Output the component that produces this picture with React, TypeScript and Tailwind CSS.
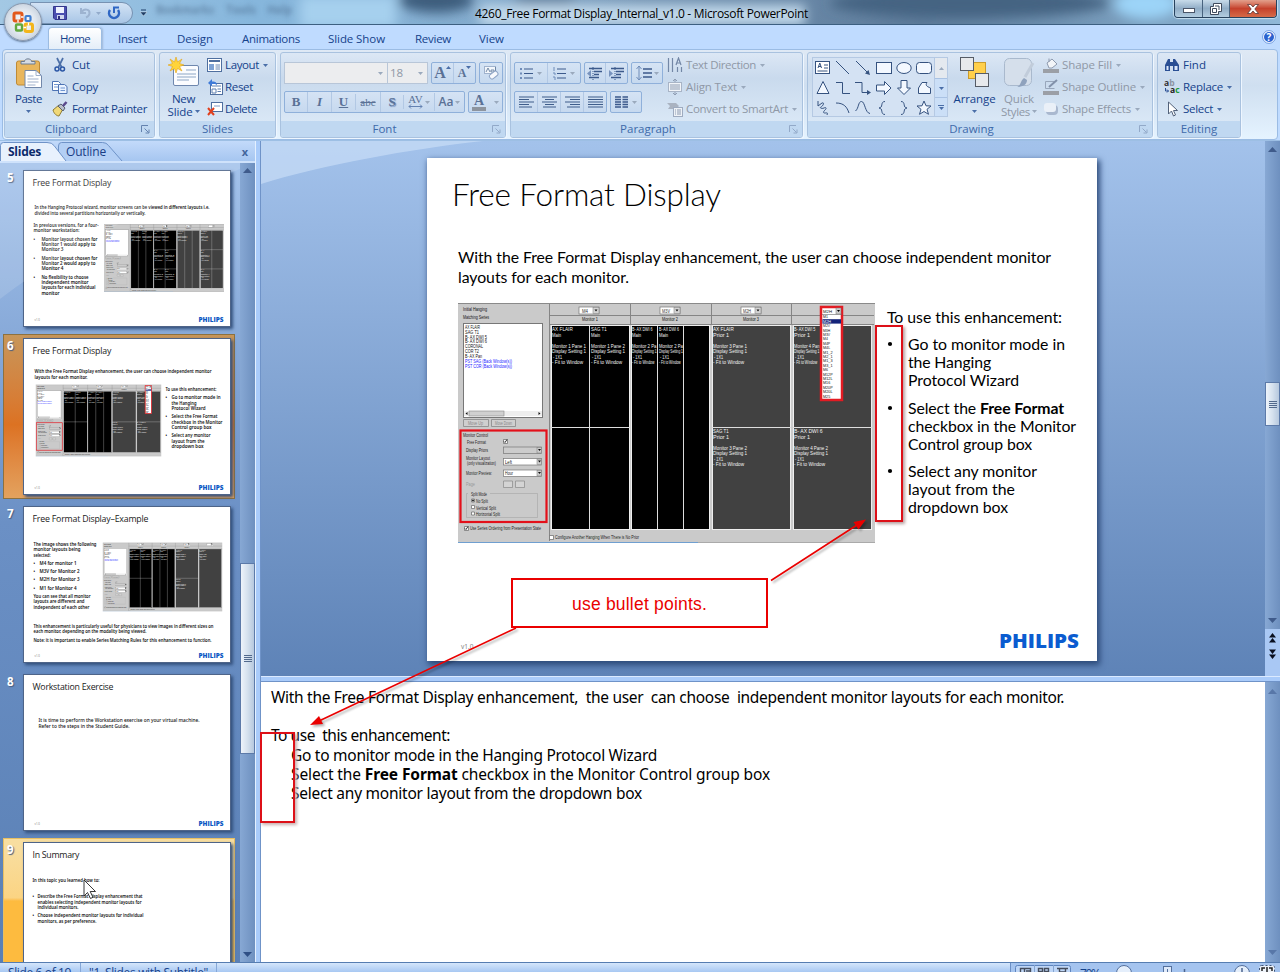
import { useLayoutEffect, useRef, useState, type ReactNode } from "react";

/* Text that spreads its letters to a given width. */
function Fit({ w, className = "", children }: { w: number; className?: string; children: ReactNode }) {
  const ref = useRef<HTMLSpanElement>(null);
  const [gap, setGap] = useState(0);
  useLayoutEffect(() => {
    const el = ref.current;
    if (!el) return;
    el.style.letterSpacing = "0px";
    const natural = el.getBoundingClientRect().width;
    const next = (w - natural) / Math.max(1, (el.textContent || "").length);
    el.style.letterSpacing = `${next}px`;
    setGap(next);
  }, [w]);
  return (
    <span ref={ref} className={`inline-block whitespace-pre ${className}`} style={{ letterSpacing: gap }}>
      {children}
    </span>
  );
}

function Caret({ dim = false, className = "" }: { dim?: boolean; className?: string }) {
  return (
    <svg width="5" height="3" viewBox="0 0 5 3" className={`shrink-0 ${className}`}>
      <path d="M0 0h5L2.5 3z" fill={dim ? "#9aa9bd" : "#4a6ea8"} />
    </svg>
  );
}

/* ---------- ribbon building blocks ---------- */

function Group({ label, width, launcher, dimLauncher, children }: { label: string; width: string; launcher?: boolean; dimLauncher?: boolean; children: ReactNode }) {
  return (
    <section className={`${width} flex h-[86px] shrink-0 flex-col overflow-hidden rounded-[3px] border border-[#a9c2df] bg-linear-to-b from-[#dce7f5] via-[#c9daed] via-30% to-[#dfecf9] shadow-[1px_1px_0_#eef6ff]`}>
      <div className="flex h-[68px] pt-px">{children}</div>
      <div className="flex h-4 items-center bg-[#c0d8f1]">
        <span className="flex-1 text-center text-[11.5px] leading-4 text-[#3e6aaa]">{label}</span>
        {launcher && (
          <svg width="9" height="9" viewBox="0 0 9 9" className="mr-1 ml-1" fill="none" stroke={dimLauncher ? "#92a9c8" : "#6482ae"}>
            <path d="M.5 7V.5H7M3.5 3.5l4 4M8 4.5V8H4.5" />
          </svg>
        )}
      </div>
    </section>
  );
}

function Row({ icon, label, w, caret, dim, iconW = "w-[18px]" }: { icon: ReactNode; label: string; w: number; caret?: boolean; dim?: boolean; iconW?: string }) {
  return (
    <div className={`flex h-[22px] items-center ${dim ? "text-[#8f98a6]" : "text-[#15428b]"}`}>
      <span className={`${iconW} flex shrink-0`}>{icon}</span>
      <Fit w={w} className="leading-[22px]">{label}</Fit>
      {caret && <Caret dim={dim} className="ml-1" />}
    </div>
  );
}

function Strip({ width, cells }: { width: string; cells: ReactNode[] }) {
  return (
    <div className={`${width} flex h-[22px] items-stretch rounded-[2px] border border-[#8fb0da] bg-linear-to-b from-[#d5e3f4] to-[#c6d9ef]`}>
      {cells.map((c, i) => (
        <div key={i} className={`flex flex-1 items-center justify-center ${i ? "border-l border-[#b2c8e4]" : ""}`}>{c}</div>
      ))}
    </div>
  );
}

function Ico({ children, w = 16, h = 16, className = "" }: { children: ReactNode; w?: number; h?: number; className?: string }) {
  return (
    <svg width={w} height={h} viewBox={`0 0 ${w} ${h}`} className={`shrink-0 ${className}`} fill="none">
      {children}
    </svg>
  );
}

const Lines = ({ d }: { d: string }) => (
  <Ico w={15} h={12}><path d={d} stroke="#3f5d8a" strokeWidth="1.2" /></Ico>
);

/* ---------- title bar ---------- */

function TitleBar() {
  return (
    <header className="relative flex h-[25px] shrink-0 items-start overflow-hidden border-b border-[#3c5f80] bg-linear-to-r from-[#a8cdec] via-[#5e7c9b] via-72% to-[#8fb8d8]">
      <div className="absolute inset-0 bg-linear-to-r from-[#a3c8e4] from-0% via-[#86b6dc] via-20% to-transparent to-50%" />
      <svg className="absolute inset-0" width="1280" height="25" viewBox="0 0 1280 25">
        <defs>
          <filter id="haze" x="-20%" y="-100%" width="140%" height="300%"><feGaussianBlur stdDeviation="6" /></filter>
          <filter id="soft" x="-20%" y="-100%" width="140%" height="300%"><feGaussianBlur stdDeviation="2.4" /></filter>
        </defs>
        <g filter="url(#haze)">
          <rect x="300" y="-4" width="96" height="32" fill="#a6d0ee" />
          <ellipse cx="436" cy="0" rx="38" ry="13" fill="#3d5d7d" />
          <ellipse cx="545" cy="-2" rx="32" ry="9" fill="#5d7f9f" />
          <rect x="480" y="5" width="325" height="20" fill="#c3daec" />
          <ellipse cx="970" cy="3" rx="140" ry="15" fill="#456482" />
          <ellipse cx="1146" cy="4" rx="32" ry="15" fill="#9cd4f8" />
        </g>
        <g filter="url(#soft)" fill="#48688a" opacity=".6" fontFamily="Open Sans, sans-serif" fontSize="12" fontWeight="700">
          <text x="156" y="14" textLength="58" lengthAdjust="spacingAndGlyphs">Bookmarks</text><text x="226" y="14" textLength="30" lengthAdjust="spacingAndGlyphs">Tools</text><text x="267" y="14" textLength="25" lengthAdjust="spacingAndGlyphs">Help</text>
        </g>
      </svg>
      <div className="relative ml-[30px] flex h-[22px] w-[103px] items-center gap-2 rounded-r-full border border-[#7792b2] bg-linear-to-b from-[#d3e3f5] to-[#a9c6e6] pl-[22px] mt-[2px]">
        <Ico w={14} h={14}>
          <path d="M.5.5h13v13H2L.5 12z" fill="#4a4fb0" stroke="#34368c" /><path d="M3 1h8v6H3z" fill="#eef2ff" /><path d="M4 9h7v4H4z" fill="#cfd6ee" /><path d="M5 10h2v3H5z" fill="#2d2f7e" />
        </Ico>
        <Ico w={22} h={14} className="ml-1">
          <path d="M2 2v5h5M2.500 6.500C5 2 11 3 10.500 7.500c-.2 2-1.500 3.200-3.500 4" stroke="#9db3d0" strokeWidth="2" /><path d="M17 6h5l-2.500 3z" fill="#93abcb" />
        </Ico>
        <Ico w={14} h={14} className="-ml-0.5">
          <path d="M3 4A5 5 0 1 0 11 4" stroke="#2f67c4" strokeWidth="2.500" /><path d="M6 1.500h6M7 1v6" stroke="#2f67c4" strokeWidth="2" />
        </Ico>
      </div>
      <Ico w={7} h={8} className="relative mt-[9px] ml-[7px]"><path d="M1 1h5" stroke="#1f3f68" /><path d="M0 3h7L3.500 7z" fill="#1f3f68" stroke="#fff" strokeWidth=".4" /></Ico>
      <div className="relative mt-[4px] ml-[328px] text-[12px] leading-5 text-black">
        <Fit w={333}>4260_Free Format Display_Internal_v1.0 - Microsoft PowerPoint</Fit>
      </div>
      <div className="relative ml-auto mr-[3px] flex h-[18px] w-[103px] overflow-hidden rounded-b-[4px] border border-t-0 border-[#28425d] shadow-[0_0_1px_1px_#c6dff0]">
        <div className="flex w-[28px] items-center justify-center border-r border-[#48637e] bg-linear-to-b from-[#c8dbea] via-[#91adc6] to-[#b3cde0]">
          <Ico w={12} h={5} className="mt-1"><rect x=".5" y=".5" width="11" height="4" fill="#fff" stroke="#4a5568" /></Ico>
        </div>
        <div className="flex w-[27px] items-center justify-center border-r border-[#48637e] bg-linear-to-b from-[#c8dbea] via-[#91adc6] to-[#b3cde0]">
          <Ico w={12} h={12}><path d="M3.500.5h8v8h-3v3h-8v-8h3z" fill="#fff" stroke="#3f4a5c" /><path d="M2.500 5.500h4v4h-4zM5 3h4v4" stroke="#3f4a5c" /></Ico>
        </div>
        <div className="flex flex-1 items-center justify-center bg-linear-to-b from-[#e2a08c] via-[#c5412c] via-50% to-[#d66a48]">
          <Ico w={12} h={10}><path d="M.5.500h3.300L6 3 8.200.5h3.300L7.800 5l3.700 4.500H8.200L6 7 3.800 9.500H.5L4.200 5z" fill="#fff" stroke="#5b3535" strokeWidth=".8" /></Ico>
        </div>
      </div>
    </header>
  );
}

function OfficeButton() {
  return (
    <div className="absolute top-[3px] left-[4px] z-20 flex size-[38px] items-center justify-center rounded-full border border-[#8b99ad] bg-radial from-white via-[#dfe6ee] to-[#b3c0d0] shadow-[0_1px_2px_#5c7390]">
      <svg width="24" height="24" viewBox="0 0 24 24" fill="none" strokeWidth="3">
        <rect x="3" y="3" width="8" height="8" rx="1.500" stroke="#e2591c" />
        <rect x="14.500" y="6" width="5" height="5" rx="1" stroke="#3f7ed0" strokeWidth="2.200" />
        <rect x="5" y="14.500" width="6" height="6" rx="1" stroke="#62a93e" strokeWidth="2.400" />
        <rect x="14" y="14" width="7.500" height="7.500" rx="1.500" stroke="#f3b51b" />
        <path d="M10 7h2.500M7 9.500v3M15 17.500h-2.500M17.500 15.500v-3" stroke="#fff" strokeWidth="1.300" />
      </svg>
    </div>
  );
}

function TabBar() {
  return (
    <nav className="flex h-[24px] shrink-0 items-start bg-[#bfdbff] pt-[2px] text-[11.5px] text-[#15428b]">
      <div className="ml-[48px] flex h-[23px] w-[54px] justify-center rounded-t-[4px] border border-b-0 border-[#9cbce2] bg-linear-to-b from-white to-[#e3edf8] shadow-[1px_0_2px_#9fb8d8]"><Fit w={30} className="leading-[22px]">Home</Fit></div>
      <Fit w={29} className="ml-[16px] leading-[24px]">Insert</Fit>
      <Fit w={36} className="ml-[30px] leading-[24px]">Design</Fit>
      <Fit w={58} className="ml-[29px] leading-[24px]">Animations</Fit>
      <Fit w={57} className="ml-[28px] leading-[24px]">Slide Show</Fit>
      <Fit w={36} className="ml-[30px] leading-[24px]">Review</Fit>
      <Fit w={25} className="ml-[28px] leading-[24px]">View</Fit>
      <svg className="mt-[3px] mr-[4px] ml-auto" width="14" height="14" viewBox="0 0 14 14">
        <circle cx="7" cy="7" r="6.400" fill="#fff" stroke="#6d9ae0" /><circle cx="7" cy="7" r="5" fill="#2a62cf" />
        <text x="7" y="10.500" textAnchor="middle" fontSize="10" fontWeight="700" fontFamily="Open Sans, sans-serif" fill="#fff">?</text>
      </svg>
    </nav>
  );
}

/* ---------- ribbon ---------- */

const glyph = "font-['Liberation_Serif',serif] font-bold text-[#5a7196]";

function ShapeGallery() {
  const s = "#35527f";
  const cells = [
    <g key="a"><rect x=".5" y="1.500" width="14" height="12" fill="#fff" stroke={s} /><path d="M9 5h4M9 8h4M2.500 11h10M3 8l1.800-5L6.500 8M3.500 6.500h2.500" stroke={s} /></g>,
    <path key="b" d="M1 1l13 13" stroke={s} />,
    <g key="c"><path d="M1 1l12 12" stroke={s} /><path d="M15 15l-5-1.500L13.500 10z" fill={s} /></g>,
    <rect key="d" x=".5" y="2.500" width="15" height="11" fill="#f3f8ff" stroke={s} />,
    <ellipse key="e" cx="8" cy="8" rx="7.200" ry="5.500" fill="#f3f8ff" stroke={s} />,
    <rect key="f" x=".5" y="2.500" width="15" height="11" rx="3" fill="#f3f8ff" stroke={s} />,
    <path key="g" d="M8 1.500l6 12H2z" fill="#f3f8ff" stroke={s} />,
    <path key="h" d="M1 2.500h6.500v11H15" stroke={s} />,
    <g key="i"><path d="M0 2.500h7v10h6" stroke={s} /><path d="M16 12.500L12 10v5z" fill={s} /></g>,
    <path key="j" d="M.5 5h8V1.500L15 8l-6.500 6.500V11h-8z" fill="#f3f8ff" stroke={s} />,
    <path key="k" d="M5 .5h6V8h3.500L8 14.500 1.500 8H5z" fill="#f3f8ff" stroke={s} />,
    <path key="l" d="M6 2.500h5c-2 3 0 4 3.500 5.500v5.500h-12V8z" fill="#f3f8ff" stroke={s} />,
    <path key="m" d="M3 1v5l4-3c3-1 1 3-1 4s1 2 3 1 3 0 1 2-2 3 0 3 3-1 2 2" stroke={s} />,
    <path key="n" d="M1 3c8 0 11 4 13 10" stroke={s} />,
    <path key="o" d="M.5 11C4 8 3 1.500 6.500 1.500S10 13 15 13.500" stroke={s} />,
    <path key="p" d="M9 1.500C4 1.500 7.500 8 3 8c4.500 0 1 6.500 6 6.500" stroke={s} />,
    <path key="q" d="M5 1.500c5 0 1.500 6.500 6 6.500-4.500 0-1 6.500-6 6.500" stroke={s} />,
    <path key="r" d="M8 1l2 4.800 5 .2-4 3.300 1.500 5L8 11.500 3.500 14.300 5 9.300 1 6l5-.2z" fill="#f3f8ff" stroke={s} />,
  ];
  return (
    <div className="mt-[3px] ml-[4px] flex h-[60px] w-[136px] border border-[#b5c9e3] bg-[#d4e2f3]">
      <div className="grid w-[121px] grid-cols-6">
        {cells.map((c, i) => (
          <div key={i} className="flex h-[20px] items-center justify-center pb-px"><Ico>{c}</Ico></div>
        ))}
      </div>
      <div className="flex flex-1 flex-col border-l border-[#b5c9e3]">
        <div className="flex h-[20px] items-center justify-center bg-[#e4e9ef]"><Caret dim className="rotate-180" /></div>
        <div className="flex h-[20px] items-center justify-center border-y border-[#a9c2e3] bg-[#cbdff7]"><Caret /></div>
        <div className="flex flex-1 flex-col items-center justify-center gap-px bg-[#cbdff7]"><i className="h-px w-[6px] bg-[#4a6ea8]" /><Caret /></div>
      </div>
    </div>
  );
}

function Ribbon() {
  const ink = "#3c5a8c";
  return (
    <div className="flex h-[92px] shrink-0 items-start border-b border-[#9dbfe4] bg-[#bfdbff] px-[2px]">
      <div className="flex h-[91px] w-full gap-[4px] rounded-[4px] border border-[#9bbce4] bg-linear-to-b from-[#dfe9f5] via-[#cfdff0] via-40% to-[#e5f3ff] pt-[2px] pl-px text-[11.5px]">
        <Group label="Clipboard" width="w-[151px]" launcher>
          <div className="flex w-[47px] flex-col items-center pt-[3px] text-[#15428b]">
            <Ico w={28} h={32}>
              <rect x="1.500" y="4" width="23" height="24" rx="2" fill="#e9b65c" stroke="#bf8a35" />
              <path d="M6 7V4.500h3.500C9.500 1 16.500 1 16.500 4.500H20V7z" fill="#d5dbe4" stroke="#6d7c92" />
              <path d="M10 13.500h11l5.500 5V30.500H10z" fill="#fff" stroke="#7288ab" /><path d="M21 13.500v5h5.500M12.500 19h6M12.500 22h11M12.500 25h11M12.500 28h8" stroke="#9fb0cb" />
            </Ico>
            <Fit w={27} className="mt-[2px] leading-4">Paste</Fit>
            <Caret className="mt-[3px]" />
          </div>
          <div className="flex flex-col">
            <Row iconW="w-[20px]" label="Cut" w={18} icon={<Ico><path d="M5 1l4.500 9M11 1L6.500 10" stroke="#4c6fa8" strokeWidth="1.700" /><circle cx="5" cy="12" r="2" stroke="#2b56a5" strokeWidth="1.500" /><circle cx="10.500" cy="12" r="2" stroke="#2b56a5" strokeWidth="1.500" /></Ico>} />
            <Row iconW="w-[20px]" label="Copy" w={26} icon={<Ico><path d="M.5 2.500h6l2 2v7h-8z" fill="#fff" stroke="#4d73b4" /><path d="M6.500 5.500h6l2.500 2v7H6.500z" fill="#e9f2ff" stroke="#4d73b4" /><path d="M2 5.500h4M2 8h4M8.500 9h4.500M8.500 11.500h4.500" stroke="#6f95d0" /></Ico>} />
            <Row iconW="w-[20px]" label="Format Painter" w={75} icon={<Ico><path d="M1 9l6-5 4 4-4 7c-2 0-5-2-6-6z" fill="#f0d878" stroke="#8c7a34" /><path d="M6 5l3-2 4 4-2 3z" fill="#b9bec8" stroke="#555f70" /><path d="M11 5l3.500-4" stroke="#5b4a8c" strokeWidth="2.500" /></Ico>} />
          </div>
        </Group>

        <Group label="Slides" width="w-[117px]">
          <div className="flex w-[47px] flex-col items-center pt-[3px] text-[#15428b]">
            <Ico w={32} h={30}>
              <rect x="5.500" y="8.500" width="25" height="20" rx="1.500" fill="#fbfcff" stroke="#6e87ae" /><path d="M18 13h10M9 17h19M9 20h19M9 23h12" stroke="#b3c2d9" strokeWidth="1.500" />
              <path d="M8 0l1.500 5L14 2l-2.500 4.500L16 8l-4.500 1.500L14 14l-4.500-2.500L8 16l-1.500-4.500L2 14l2.500-4.500L0 8l4.500-1.500L2 2l4.500 3z" fill="#ffd43a" stroke="#e3a51c" strokeWidth=".6" />
            </Ico>
            <Fit w={23} className="mt-[5px] leading-[13px]">New</Fit>
            <div className="flex items-center leading-[13px]"><Fit w={25}>Slide</Fit><Caret className="ml-0.5" /></div>
          </div>
          <div className="flex flex-col">
            <Row label="Layout" w={34} caret icon={<Ico w={15} h={14}><rect x=".5" y=".5" width="14" height="13" fill="#fff" stroke="#4f6f9f" /><path d="M2 3h11" stroke="#4f6f9f" strokeWidth="2" /><path d="M2 6h5v6H2z" fill="#7fa3d5" /><path d="M8.500 7H13M8.500 9H13M8.500 11H13" stroke="#6886b2" /></Ico>} />
            <Row label="Reset" w={28} icon={<Ico><rect x="3.500" y="4.500" width="12" height="11" fill="#fff" stroke="#4f6f9f" /><path d="M5 7h9M5 10h4v4H5zM10.500 10H14M10.500 12.500H14" stroke="#5f80b0" /><path d="M1 4l4-4v2.500c4 0 5 1.500 5 4C9 5 8 4.800 5 5v2.500z" fill="#3f7bd8" /></Ico>} />
            <Row label="Delete" w={32} icon={<Ico><rect x="4.500" y="1.500" width="11" height="9" fill="#fff" stroke="#4f6f9f" /><path d="M7 5h6" stroke="#7f9dc8" /><path d="M1 7l6 7M7 7l-6 7" stroke="#e1401e" strokeWidth="2" /></Ico>} />
          </div>
        </Group>

        <Group label="Font" width="w-[226px]" launcher dimLauncher>
          <div className="flex flex-col gap-[7px] pt-[8px] pl-[3px]">
            <div className="flex">
              <div className="flex h-[22px] w-[104px] items-center justify-end border border-[#b8c6d8] bg-[#ecedef] pr-1"><Caret dim /></div>
              <div className="flex h-[22px] w-[40px] items-center justify-between border border-l-0 border-[#b8c6d8] bg-[#ecedef] px-1 pl-0.5 text-[#8f98a6]">18<Caret dim /></div>
              <div className="ml-[3px]"><Strip width="w-[45px]" cells={[
                <span key="1" className="flex items-start"><span className={`${glyph} text-[16px] leading-5`}>A</span><Caret className="mt-[3px] rotate-180" /></span>,
                <span key="2" className="flex items-start"><span className={`${glyph} text-[12px] leading-5`}>A</span><Caret className="mt-[3px]" /></span>]} /></div>
              <div className="ml-[3px]"><Strip width="w-[24px]" cells={[<Ico key="c"><rect x="1.500" y="1.500" width="11" height="7" fill="#f2f6fb" stroke="#9fb2cd" /><path d="M3 7l2-4 2 4M8 5h3v2H8zM12.500 2v6" stroke="#66809f" strokeWidth=".9" /><rect x="6" y="8" width="9" height="5" rx="2" transform="rotate(-38 10 10)" fill="#f7f9fd" stroke="#8ea4c6" /></Ico>]} /></div>
            </div>
            <div className="flex gap-[3px]">
              <div className="flex h-[22px] w-[181px] items-center rounded-[2px] border border-[#8fb0da] bg-linear-to-b from-[#d5e3f4] to-[#c6d9ef]">
                <span className={`${glyph} w-[22px] text-center text-[13px]`}>B</span>
                <span className={`${glyph} w-[24px] border-l border-[#b2c8e4] text-center text-[13px] italic`}>I</span>
                <span className={`${glyph} w-[24px] border-l border-[#b2c8e4] text-center text-[13px] underline`}>U</span>
                <span className={`${glyph} w-[25px] border-l border-[#b2c8e4] text-center text-[11px] font-normal line-through`}>abc</span>
                <span className={`${glyph} w-[23px] border-l border-[#b2c8e4] text-center text-[13px] [text-shadow:1px_1px_1px_#6c89b8]`}>S</span>
                <span className={`${glyph} flex w-[31px] items-center justify-center gap-0.5 border-l border-[#b2c8e4] text-[11px] font-normal`}><span className="flex flex-col items-center leading-[9px]">AV<Ico w={15} h={5}><path d="M1 2.500h13M3 .5l-2 2 2 2M12 .5l2 2-2 2" stroke="#6482b2" /></Ico></span><Caret dim /></span>
                <span className="flex flex-1 items-center justify-center gap-0.5 border-l border-[#b2c8e4] text-[12px] font-semibold text-[#5a7196]">Aa<Caret dim /></span>
              </div>
              <Strip width="w-[35px]" cells={[<span key="a" className="flex items-center gap-1"><span className={`${glyph} border-b-4 border-[#8d949e] px-0.5 text-[14px] leading-[13px]`}>A</span><Caret dim className="ml-1" /></span>]} />
            </div>
          </div>
        </Group>

        <Group label="Paragraph" width="w-[293px]" launcher dimLauncher>
          <div className="flex w-[152px] flex-col gap-[7px] pt-[8px] pl-[3px]">
            <div className="flex gap-[3px]">
              <Strip width="w-[67px]" cells={[
                <span key="1" className="flex items-center gap-1"><Ico w={14} h={13}><path d="M5 2h9M5 6.500h9M5 11h9" stroke={ink} /><path d="M1 2h2M1 6.500h2M1 11h2" stroke="#6f8cb9" strokeWidth="2" /></Ico><Caret dim /></span>,
                <span key="2" className="flex items-center gap-1"><Ico w={14} h={13}><path d="M5 2h9M5 6.500h9M5 11h9" stroke={ink} /><path d="M2 0v4M1 6h2v2M1 10h2v3" stroke="#6f8cb9" /></Ico><Caret dim /></span>]} />
              <Strip width="w-[45px]" cells={[
                <Ico key="1" w={15} h={13}><path d="M2 1.500h13M7 4.500h8M7 7.500h5M2 10.500h10" stroke={ink} strokeWidth="1.500" /><path d="M4 3L0 6.500 4 10z" fill="#7792bd" /><path d="M6 0v13" stroke={ink} strokeDasharray="1 1" /></Ico>,
                <Ico key="2" w={15} h={13}><path d="M2 1.500h13M7 4.500h8M7 7.500h5M2 10.500h10" stroke={ink} strokeWidth="1.500" /><path d="M0 3l4 3.500L0 10z" fill="#7792bd" /><path d="M6 0v13" stroke={ink} strokeDasharray="1 1" /></Ico>]} />
              <Strip width="w-[32px]" cells={[<span key="1" className="flex items-center gap-0.5"><Ico w={16} h={16}><path d="M7 4h9M7 8h9M7 12h9" stroke={ink} strokeWidth="1.300" /><path d="M3 1v14M.5 4L3 1l2.500 3M.5 12L3 15l2.500-3" stroke="#6f8cb9" /></Ico><Caret dim /></span>]} />
            </div>
            <div className="flex gap-[3px]">
              <Strip width="w-[93px]" cells={[
                <Lines key="1" d="M0 1h15M0 3.500h10M0 6h15M0 8.500h10M0 11h13" />,
                <Lines key="2" d="M0 1h15M3 3.500h9M0 6h15M3 8.500h9M1 11h13" />,
                <Lines key="3" d="M0 1h15M5 3.500h10M0 6h15M5 8.500h10M2 11h13" />,
                <Lines key="4" d="M0 1h15M0 3.500h15M0 6h15M0 8.500h15M0 11h15" />]} />
              <Strip width="w-[32px]" cells={[<span key="1" className="flex items-center gap-1"><Ico w={13} h={12}><path d="M0 1h6M0 3.500h6M0 6h6M0 8.500h6M0 11h6M7.500 1h6M7.500 3.500h6M7.500 6h6M7.500 8.500h6M7.500 11h6" stroke={ink} strokeWidth="1.300" /></Ico><Caret dim /></span>]} />
            </div>
          </div>
          <div className="ml-[4px] flex flex-col">
            <Row dim iconW="w-[19px]" label="Text Direction" w={70} caret icon={<Ico><path d="M1.500 1v14M5.500 1v14M10.500 10v5M14.500 10v5M9 8l2.500-7L14 8M10 6h3" stroke="#7387a6" strokeWidth="1.200" /></Ico>} />
            <Row dim iconW="w-[19px]" label="Align Text" w={51} caret icon={<Ico><rect x="1.500" y="3.500" width="13" height="9" fill="#f1f4f8" stroke="#a8b4c6" /><path d="M3 6h10M3 8h10M3 10h10" stroke="#8f9db3" /><path d="M8 0v3M6 2l2-2 2 2M8 16v-3M6 14l2 2 2-2" stroke="#8f9db3" /></Ico>} />
            <Row dim iconW="w-[19px]" label="Convert to SmartArt" w={102} caret icon={<Ico><path d="M0 2h9l3 3-3 3H1l2-3z" fill="#aab3c1" /><rect x="6.500" y="6.500" width="9" height="9" fill="#eef2f7" stroke="#9eabc0" /><path d="M8 9h1M10 9h4M8 11h1M10 11h4M8 13h1M10 13h4" stroke="#8c9ab1" /></Ico>} />
          </div>
        </Group>

        <Group label="Drawing" width="w-[346px]" launcher dimLauncher>
          <ShapeGallery />
          <div className="ml-[5px] flex w-[43px] flex-col items-center pt-[2px] text-[#15428b]">
            <Ico w={31} h={32}><rect x="9.500" y="6.500" width="17" height="16" fill="#ffcf4b" stroke="#c99b2c" /><rect x="1.500" y="1.500" width="13" height="13" fill="#e7e9ec" stroke="#565c66" /><rect x="16.500" y="17.500" width="13" height="13" fill="#e7e9ec" stroke="#565c66" /></Ico>
            <Fit w={42} className="mt-[3px] leading-4">Arrange</Fit>
            <Caret className="mt-[3px]" />
          </div>
          <div className="ml-[5px] flex w-[36px] flex-col items-center pt-[3px] text-[#8f98a6]">
            <Ico w={32} h={31}><rect x="1.500" y="1.500" width="27" height="27" rx="5" fill="#d5dfeb" stroke="#a9b9cd" /><path d="M30 6l-8 14" stroke="#c1ccda" strokeWidth="3" /><path d="M14 30c4-1 3-6 7-9l3 2c0 5-5 7-10 7z" fill="#8fa2bd" /></Ico>
            <Fit w={30} className="mt-[4px] leading-[13px]">Quick</Fit>
            <div className="flex items-center leading-[13px]"><Fit w={29}>Styles</Fit><Caret dim className="ml-0.5" /></div>
          </div>
          <div className="ml-[6px] flex flex-col">
            <Row dim iconW="w-[19px]" label="Shape Fill" w={50} caret icon={<Ico><path d="M4 6l5-4 5 5-5 4H6z" fill="#f3f5f8" stroke="#8e9aae" /><path d="M6 5V1.500" stroke="#8e9aae" /><path d="M0 12h16v4H0z" fill="#9b9fa6" /></Ico>} />
            <Row dim iconW="w-[19px]" label="Shape Outline" w={74} caret icon={<Ico><path d="M2.500 2.500h9M2.500 2.500v7h9" stroke="#98a6bb" /><path d="M6 8l8-7" stroke="#8291aa" strokeWidth="2" /><path d="M0 12h16v4H0z" fill="#9b9fa6" /></Ico>} />
            <Row dim iconW="w-[19px]" label="Shape Effects" w={69} caret icon={<Ico><rect x="3" y="4" width="12" height="10" rx="4" fill="#a9b8cf" /><rect x="1" y="2" width="12" height="9" rx="3" fill="#eaf0f8" /></Ico>} />
          </div>
        </Group>

        <Group label="Editing" width="w-[84px]">
          <div className="ml-[6px] flex flex-col">
            <Row iconW="w-[19px]" label="Find" w={23} icon={<Ico><path d="M1 14V8l3-6h2v12zM9 14V2h2l4 6v6z" fill="#2a4f94" /><path d="M6 5h3v4H6z" fill="#2a4f94" /><path d="M2.500 9h2v4h-2zM10.500 9h3v4h-3z" fill="#dbe7fa" /></Ico>} />
            <Row iconW="w-[19px]" label="Replace" w={40} caret icon={<svg width="16" height="18" viewBox="0 0 16 18" className="overflow-visible" fontFamily="Open Sans, sans-serif" fontWeight="700" fontSize="8.500"><text x="0" y="8" fill="#333">a<tspan fill="#8b93a3">b</tspan></text><text x="6" y="15" fill="#222">a<tspan fill="#1d9a3c">c</tspan></text><path d="M1.500 10v3h3M3 11.500L4.500 13 3 14.500" fill="none" stroke="#2a4f94" /></svg>} />
            <Row iconW="w-[19px]" label="Select" w={30} caret icon={<Ico><path d="M4.500 1v12l3-3 2 5 2-1-2-4.500h4z" fill="#fff" stroke="#53627a" /></Ico>} />
          </div>
        </Group>
      </div>
    </div>
  );
}

/* ---------- picture of the hanging-protocol dialog ---------- */

type Mark = [number, number, string, number];

function Marks({ items, fill, size = 5.6 }: { items: Mark[]; fill: string; size?: number }) {
  return (
    <g fill={fill} fontSize={size} fontFamily="Liberation Sans, sans-serif">
      {items.map(([x, y, t, w], i) => <text key={i} x={x} y={y} textLength={w} lengthAdjust="spacingAndGlyphs">{t}</text>)}
    </g>
  );
}

const pane = (x: number, y: number, head: string, sub: string, mon: string, k = 1): Mark[] => [
  [x, y, head, head.length * 2.6 * k], [x, y + 6, sub, sub.length * 2.3], [x, y + 16.500, mon, 34 * k], [x, y + 22, "Display Setting 1", 34 * k],
  [x + 1, y + 27.500, "- 1X1", 9], [x, y + 33, "- Fit to Window", 31 * k],
];

function DialogPicture({ variant = "free", ...box }: { variant?: "free" | "grid" | "example"; x?: number; y?: number; width: number; height: number }) {
  const grid = variant === "grid";
  const free = variant === "free";
  const options = ["M2V", "M3H", "M3V", "M4", "M4P", "M4L", "M1_2", "M2_1", "M1_3", "M3_1", "M6", "M12P", "M12L", "M16", "M20P", "M20L", "M25"];
  return (
    <svg {...box} viewBox="0 0 417 240" preserveAspectRatio="none">
      <rect width="417" height="240" fill="#cacaca" />
      <path d="M0 .5h417" stroke="#8a8a8a" />
      <path d="M91.500 1v237M172.500 1v20M253.500 1v20M333.500 1v20M91 12.500h325M91 21.500h325" stroke="#858585" fill="none" />
      <Marks fill="#111" size={5} items={[[5, 8, "Initial Hanging", 24], [5, 15.500, "Matching Series", 26], [124, 18, "Monitor 1", 16], [204, 18, "Monitor 2", 16], [285, 18, "Monitor 3", 16]]} />
      {[121, 202, 283, 363].map((x) => (
        <g key={x}><rect x={x} y="4" width="20" height="7" fill="#fff" stroke="#777" strokeWidth=".7" /><rect x={x + 14} y="4.500" width="6" height="6" fill="#d4d4d4" stroke="#777" strokeWidth=".5" /><path d={`M${x + 15.500} 6.500h3l-1.500 2z`} fill="#111" /></g>
      ))}
      <Marks fill="#333" size={5} items={[[124, 9.500, "M4", 6], [204, 9.500, "M3V", 8], [285, 9.500, "M2H", 8]]} />
      <rect x="5.500" y="20.500" width="79" height="94" fill="#fff" stroke="#777" />
      <Marks fill="#111" size={4.6} items={[[7, 26, "AX FLAIR", 15], [7, 30.700, "SAG T1", 14], [7, 35.500, "B- AX DWI 5", 22], [7, 40.300, "B- AX DWI 6", 22], [7, 45, "CORONAL", 18], [7, 49.700, "COR T2", 14], [7, 54.500, "B- AX Pan", 17]]} />
      <Marks fill="#2222ff" size={4.6} items={[[7, 59.500, "PST SAG (Back Window(s))", 47], [7, 64.500, "PST COR (Back Window(s))", 47]]} />
      <rect x="6" y="108" width="78" height="5" fill="#eee" /><rect x="11" y="108" width="35" height="5" fill="#d0d0d0" stroke="#888" strokeWidth=".6" />
      <path d="M9.500 109v3l-2-1.500zM80.500 109v3l2-1.500z" fill="#111" />
      <path d="M5.500 116.500h25v7h-25zM33.500 116.500h24v7h-24z" stroke="#888" fill="#cfcfcf" strokeWidth=".8" />
      <Marks fill="#888" size={5} items={[[10, 122, "Move Up", 15], [37, 122, "Move Down", 17]]} />
      <Marks fill="#222" size={4.800} items={[[5, 134, "Monitor Control", 25], [9, 141, "Free Format", 19], [8, 149, "Display Priors", 22], [8, 156.800, "Monitor Layout", 24], [9, 162.300, "(only visualization)", 29], [8, 172, "Monitor Preview:", 26], [13, 193, "Split Mode", 16], [18, 200, "No Split", 12], [18, 206.500, "Vertical Split", 20], [18, 213, "Horizontal Split", 24], [12, 227, "Use Series Ordering from Presentation State", 71], [97, 236, "Configure Another Hanging When There is No Prior", 84]]} />
      <Marks fill="#999" size={5} items={[[8, 183, "Page", 9]]} />
      <path d="M45.500 136.500h4v4h-4zM13.500 196h3v3h-3zM13.500 202.500h3v3h-3zM13.500 209h3v3h-3zM6.500 223.500h4v4h-4zM91.500 232.500h4v4h-4z" fill="#fff" stroke="#666" strokeWidth=".7" />
      <path d="M46 138.500l1 1 2-3M7 225.500l1 1 2-3" stroke="#000" fill="none" strokeWidth=".8" /><circle cx="15" cy="197.500" r=".9" />
      <path d="M10 190.500H8.500v24h71v-24H32" fill="none" stroke="#aaa" strokeWidth=".7" />
      {[144, 155.500, 167].map((y, i) => (
        <g key={y}><rect x="45.500" y={y} width="38" height="6.500" fill={i ? "#fff" : "#ccc"} stroke="#777" strokeWidth=".7" /><rect x="79" y={y + .5} width="4.500" height="5.500" fill="#ccc" stroke="#777" strokeWidth=".5" /><path d={`M80 ${y + 2}h3l-1.500 2z`} fill="#111" /></g>
      ))}
      <Marks fill="#222" size={4.6} items={[[47, 160.500, "Left", 7], [47, 172, "Hour", 8]]} />
      <path d="M45.500 178h9v6.500h-9zM57.500 178h9v6.500h-9z" fill="#d4d4d4" stroke="#888" strokeWidth=".7" />
      {[93, 173].map((x) => <rect key={x} x={x + .5} y="22.500" width="78" height="204" fill="#000" stroke="#eee" />)}
      {[254, 335].map((x) => <rect key={x} x={x + .5} y="22.500" width="78" height="204" fill="#414141" stroke="#eee" />)}
      {grid ? (
        <path d="M119.500 23v203M145.500 23v203M212.500 23v203M173 90.500h79M173 158.500h79M280.500 23v203M306.500 23v203M374.500 23v203M335 90.500h79M335 158.500h79" stroke="#ddd" fill="none" />
      ) : (
        <path d={free ? "M131.500 23v203M93 124.500h79M199.500 23v203M225.500 23v203M254 124.500h79M335 124.500h79" : "M131.500 23v203M93 124.500h79M199.500 23v203M225.500 23v203M254 124.500h79"} stroke="#ddd" fill="none" />
      )}
      <Marks fill="#f4f4f4" size={4.900} items={[
        ...pane(94, 28, "AX FLAIR", "Main", "Monitor 1 Pane 1"), ...pane(133, 28, "SAG T1", "Main", "Monitor 1 Pane 2"),
        ...pane(174, 28, "B- AX DWI 6", "Main", "Monitor 2 Pa", .72), ...pane(201, 28, "B- AX DWI 6", "Main", "Monitor 2 Pa", .7),
        ...pane(255, 28, "AX FLAIR", "Prior 1", "Monitor 3 Pane 1"), ...pane(336, 28, "B- AX DWI 5", "Prior 1", "Monitor 4 Pan", .75),
        ...(grid ? [] : pane(255, 130, "SAG T1", "Prior 1", "Monitor 3 Pane 2")), ...(free ? pane(336, 130, "B- AX DWI 6", "Prior 1", "Monitor 4 Pane 2") : []),
        ...(grid ? [...pane(174, 96, "B- AX", "Main", "Monitor 2", .9), ...pane(174, 164, "B- AX", "Main", "Monitor 2", .9), ...pane(213, 96, "B- AX", "Main", "Monitor 2", .9), ...pane(213, 164, "B- AX", "Main", "Monitor 2", .9), ...pane(336, 96, "B- AX", "Main", "Monitor 4", .9), ...pane(336, 164, "B- AX", "Main", "Monitor 4", .9)] : []),
      ]} />
      {free && (
        <g>
          <rect x="363" y="4" width="21" height="93" fill="#fff" stroke="#e31b23" strokeWidth="2.500" />
          <path d="M364 11.500h20" stroke="#666" strokeWidth=".6" /><rect x="378" y="5" width="5" height="6" fill="#ccc" stroke="#777" strokeWidth=".5" /><path d="M379 7h3l-1.500 2z" />
          <rect x="364.500" y="16.200" width="18.500" height="4.400" fill="#14247a" />
          <Marks fill="#111" size={3.7} items={[[365, 9.500, "M2H", 9], [365, 15.300, "M1", 5], ...options.map((o, i): Mark => [365, 24.100 + i * 4.400, o, o.length * 2.400])]} />
          <Marks fill="#fff" size={3.7} items={[[365, 19.700, "M2H", 8]]} />
          <rect x="2.500" y="127.500" width="86" height="91.500" fill="none" stroke="#e3101a" strokeWidth="2.200" />
        </g>
      )}
      <path d="M0 239.500h240" stroke="#6f9fd0" /><path d="M240 239.500h177" stroke="#aaa" />
    </svg>
  );
}

/* ---------- slide thumbnails ---------- */

function Thumb({ num, title, titleW, state = "plain", lines, children, cursor }: { num: string; title: string; titleW: number; state?: "plain" | "current" | "hover"; lines: Mark[]; children?: ReactNode; cursor?: boolean }) {
  const skin = {
    plain: "border-transparent",
    current: "border-[#8d713f] bg-linear-to-b from-[#c79659] via-[#dc7222] via-55% to-[#e3a25e]",
    hover: "border-[#e8bf62] bg-linear-to-b from-[#f8dea0] from-5% via-[#fbd483] via-36% to-[#fdbb3f] to-38%",
  }[state];
  const plainText = num === "8";
  return (
    <div className={`flex h-[165px] w-[232px] shrink-0 items-start border ${skin}`}>
      <span className="mt-[3px] w-[19px] pl-[3px] text-[11.5px] leading-4 font-bold text-white [text-shadow:1px_1px_1px_#4a5f80]">{num}</span>
      <svg width="208" height="157" viewBox="-.5 -.5 208 157" className="mt-[3px] shadow-[2px_2px_3px_#33507c]">
        <rect width="207" height="156" fill="#fff" stroke="#4e6488" />
        <text x="9" y="15.500" textLength={titleW} fontSize="8.800" fontFamily="Open Sans, sans-serif" fill="#222">{title}</text>
        <g fontSize={plainText ? 5.4 : 4.4} fontFamily="Noto Sans, sans-serif" fontWeight={plainText ? 500 : 600} fill="#111">
          {lines.map(([x, y, t, w], i) => <text key={i} x={x} y={y} textLength={w} lengthAdjust="spacingAndGlyphs">{t}</text>)}
        </g>
        {children}
        {num !== "9" && <text x="11" y="150" fontSize="2.800" fill="#777">v1.0</text>}
        {num !== "9" && <text x="175" y="151" textLength="25" lengthAdjust="spacingAndGlyphs" fontSize="6" fontWeight="800" fontFamily="Open Sans, sans-serif" fill="#0b57c4">PHILIPS</text>}
        {cursor && <path d="M60.500 37.500v16l3.500-3.500 3 6 2.500-1.200-2.800-5.800h5.300z" fill="#fff" stroke="#222" strokeWidth=".9" />}
      </svg>
    </div>
  );
}

function ScrollTrack() {
  return (
    <div className="flex w-[15px] shrink-0 flex-col items-center justify-between bg-linear-to-r from-[#87a8d4] to-[#6e90bf] py-[7px]">
      <Ico w={9} h={5}><path d="M0 5h9L4.500 0z" fill="#5877a8" /></Ico>
      <Ico w={9} h={5}><path d="M0 0h9L4.500 5z" fill="#5877a8" /></Ico>
    </div>
  );
}

function Grip({ className }: { className: string }) {
  return (
    <div className={`${className} flex w-[15px] flex-col items-center justify-center gap-px border border-[#5c7aa9] bg-linear-to-r from-[#eef4fb] via-[#d5e1ee] to-[#b6c8de]`}>
      <i className="h-px w-2 bg-[#52698c]" /><i className="h-px w-2 bg-[#52698c]" /><i className="h-px w-2 bg-[#52698c]" /><i className="h-px w-2 bg-[#52698c]" />
    </div>
  );
}

function SlidePanel() {
  return (
    <aside className="flex w-[255px] shrink-0 flex-col bg-[#a5c5ef]">
      <div className="relative flex h-[22px] shrink-0 items-center border-b-2 border-[#cfe2fb] bg-linear-to-b from-[#c3dafa] to-[#a6c6f0] text-[12px]">
        <svg className="absolute inset-0" width="255" height="20" viewBox="0 0 255 20" fill="none">
          <path d="M58.500 20V5q0-3.500 3-3.500h41q4 0 6 3L122 20" fill="#b3cff5" stroke="#6f93c8" />
          <path d="M.5 20V4.500q0-3 3-3H47q5 0 7 3L66 20" fill="#e8f1fd" stroke="#6f93c8" />
        </svg>
        <b className="relative ml-[8px] flex"><Fit w={33} className="pt-0.5 leading-5 text-[#0b2a6b]">Slides</Fit></b>
        <span className="relative ml-[25px] flex"><Fit w={40} className="pt-0.5 leading-5 text-[#1a3d85]">Outline</Fit></span>
        <b className="relative mr-[7px] ml-auto pt-0.5 text-[11px] leading-4 text-[#44669c]">x</b>
      </div>
      <div className="flex min-h-0 flex-1">
        <div className="relative flex w-[240px] flex-col gap-[3px] overflow-hidden bg-linear-to-b from-[#a3c2eb] via-[#6b90c5] via-45% to-[#5a80b5] pt-[3px] pl-[3px]">
          <svg className="absolute inset-0" width="240" height="160" viewBox="0 0 240 160"><path d="M0 0h240v6C150 40 60 90 0 136z" fill="#fff" opacity=".13" /></svg>
          <Thumb num="5" title="Free Format Display" titleW={79} lines={[
            [11, 38, "In the Hanging Protocol wizard, monitor screens can be viewed in different layouts i.e.", 175], [11, 44, "divided into several partitions horizontally or vertically.", 111],
            [10, 56, "In previous versions, for a four-", 65], [10, 61, "monitor workstation:", 46],
            [10, 70, "•", 1.500], [18, 70, "Monitor layout chosen for", 56], [18, 75, "Monitor 1 would apply to", 54], [18, 80, "Monitor 3", 22],
            [10, 89, "•", 1.500], [18, 89, "Monitor layout chosen for", 56], [18, 94, "Monitor 2 would apply to", 54], [18, 99, "Monitor 4", 22],
            [10, 108, "•", 1.500], [18, 108, "No flexibility to choose", 47], [18, 113, "independent monitor", 47], [18, 118, "layouts for each individual", 54], [18, 124, "monitor", 18],
          ]}><DialogPicture variant="grid" x={80.500} y={53.500} width={120} height={68} /></Thumb>
          <Thumb num="6" title="Free Format Display" titleW={79} state="current" lines={[
            [11, 34, "With the Free Format Display enhancement, the user can choose independent monitor", 177], [11, 40, "layouts for each monitor.", 53],
            [142, 52, "To use this enhancement:", 51], [142, 60, "•", 1.500], [148, 60, "Go to monitor mode in", 49], [148, 66, "the Hanging", 25], [148, 71, "Protocol Wizard", 34],
            [142, 79, "•", 1.500], [148, 79, "Select the Free Format", 46], [148, 85, "checkbox in the Monitor", 51], [148, 90, "Control group box", 40],
            [142, 98, "•", 1.500], [148, 98, "Select any monitor", 39], [148, 104, "layout from the", 33], [148, 109, "dropdown box", 32],
          ]}><DialogPicture x={12} y={46} width={126} height={72} /></Thumb>
          <Thumb num="7" title="Free Format Display–Example" titleW={116} lines={[
            [10, 39, "The image shows the following", 63], [10, 44, "monitor layouts being", 47], [10, 50, "selected:", 17],
            [10, 58, "•", 1.500], [16, 58, "M4 for monitor 1", 37], [10, 66, "•", 1.500], [16, 66, "M3V for Monitor 2", 40], [10, 74, "•", 1.500], [16, 74, "M2H for Monitor 3", 40], [10, 83, "•", 1.500], [16, 83, "M1 for Monitor 4", 37],
            [10, 91, "You can see that all monitor", 57], [10, 96, "layouts are different and", 51], [10, 102, "independent of each other", 56],
            [10, 121, "This enhancement is particularly useful for physicians to view images in different sizes on", 180], [10, 126, "each monitor, depending on the modality being viewed.", 113], [10, 135, "Note: it is important to enable Series Matching Rules for this enhancement to function.", 178],
          ]}><DialogPicture variant="example" x={79} y={36} width={120} height={69} /></Thumb>
          <Thumb num="8" title="Workstation Exercise" titleW={81} lines={[[15, 47, "It is time to perform the Workstation exercise on your virtual machine.", 161], [15, 53, "Refer to the steps in the Student Guide.", 91]]} />
          <Thumb num="9" title="In Summary" titleW={47} state="hover" cursor lines={[
            [9, 39, "In this topic you learned how to:", 67], [9, 55, "•", 1.500], [14, 55, "Describe the Free Format Display enhancement that", 105], [14, 61, "enables selecting independent monitor layouts for", 104], [14, 66, "individual monitors.", 41],
            [9, 74, "•", 1.500], [14, 74, "Choose independent monitor layouts for individual", 106], [14, 80, "monitors, as per preference.", 59],
          ]} />
        </div>
        <div className="flex w-[15px] flex-col items-center bg-linear-to-r from-[#87a8d4] to-[#6e90bf]">
          <Ico w={9} h={5} className="mt-[5px]"><path d="M0 5h9L4.500 0z" fill="#3f5b8b" /></Ico>
          <Grip className="mt-[390px] h-[191px]" />
          <Ico w={9} h={5} className="mt-auto mb-[5px]"><path d="M0 0h9L4.500 5z" fill="#2f4f85" /></Ico>
        </div>
      </div>
    </aside>
  );
}

/* ---------- slide, notes ---------- */

function Bullet({ rows, gap = "" }: { rows: { w: number; t: ReactNode }[]; gap?: string }) {
  return (
    <li className={`flex ${gap}`}>
      <svg width="21" height="18" viewBox="0 0 21 18" className="shrink-0"><circle cx="3" cy="9" r="2.100" /></svg>
      <div className="flex flex-col items-start">{rows.map((r, i) => <Fit key={i} w={r.w} className="leading-[18px]">{r.t}</Fit>)}</div>
    </li>
  );
}

function Slide() {
  return (
    <article className="mt-[17px] ml-[166px] flex h-[503px] w-[670px] flex-col bg-white font-['Lato','Open_Sans',sans-serif] text-[15.8px] text-black shadow-[2px_3px_6px_1px_#2c4a7a]">
      <h1 className="mt-[16px] ml-[25px] flex text-[31.5px] leading-[40px] font-light"><Fit w={269}>Free Format Display</Fit></h1>
      <div className="mt-[33px] ml-[31px] flex flex-col items-start leading-5">
        <Fit w={593}>With the Free Format Display enhancement, the user can choose independent monitor</Fit>
        <Fit w={171}>layouts for each monitor.</Fit>
      </div>
      <div className="mt-[16px] ml-[31px] flex items-start">
        <DialogPicture width={417} height={240} />
        <div className="mt-[2px] ml-[12px] flex flex-col items-start">
          <Fit w={175} className="leading-6">To use this enhancement:</Fit>
          <ul className="mt-[6px]">
            <Bullet rows={[{ w: 157, t: "Go to monitor mode in" }, { w: 83, t: "the Hanging" }, { w: 111, t: "Protocol Wizard" }]} />
            <Bullet gap="mt-[10px]" rows={[{ w: 156, t: <>Select the <b>Free Format</b></> }, { w: 168, t: "checkbox in the Monitor" }, { w: 124, t: "Control group box" }]} />
            <Bullet gap="mt-[9px]" rows={[{ w: 129, t: "Select any monitor" }, { w: 107, t: "layout from the" }, { w: 100, t: "dropdown box" }]} />
          </ul>
        </div>
      </div>
      <footer className="mt-auto mr-[17px] mb-[9px] ml-[34px] flex items-end justify-between">
        <span className="font-['Noto_Sans',sans-serif] text-[6.5px] leading-[10px] text-[#888]">v1.0</span>
        <svg width="81" height="22" viewBox="0 0 81 22">
          <text x="0" y="17.500" textLength="80" lengthAdjust="spacingAndGlyphs" fontSize="18.500" fontWeight="800" fontFamily="Open Sans, sans-serif" fill="#0b5cd0">PHILIPS</text>
        </svg>
      </footer>
    </article>
  );
}

function Workspace() {
  return (
    <main className="flex min-w-0 flex-1 flex-col">
      <div className="flex h-[535px] shrink-0">
        <div className="relative flex w-[1004px] items-start overflow-hidden bg-linear-to-b from-[#a3c2eb] to-[#5e83b7]">
          <svg className="absolute inset-0" width="240" height="50" viewBox="0 0 240 50"><path d="M0 0h222C150 8 60 24 0 43z" fill="#c6dbf5" opacity=".75" /></svg>
          <div className="relative"><Slide /></div>
        </div>
        <div className="flex w-[15px] flex-col items-center bg-linear-to-r from-[#87a8d4] to-[#6e90bf]">
          <Ico w={9} h={5} className="mt-[6px]"><path d="M0 5h9L4.500 0z" fill="#3f5b8b" /></Ico>
          <Grip className="mt-[230px] h-[44px]" />
          <Ico w={9} h={5} className="mt-auto mb-[6px]"><path d="M0 0h9L4.500 5z" fill="#3f5b8b" /></Ico>
          <div className="flex h-[47px] w-full flex-col items-center gap-[6px] bg-[#a9c8f4] pt-[4px]">
            <Ico w={9} h={10}><path d="M1 4.500h7L4.500 0zM1 9.500h7L4.500 5z" fill="#0a1020" /></Ico>
            <Ico w={9} h={10}><path d="M1 .5h7L4.500 5zM1 5.500h7L4.500 10z" fill="#0a1020" /></Ico>
          </div>
        </div>
      </div>
      <div className="h-[6px] shrink-0 border-y border-t-[#dbeaff] border-b-[#6f93c8] bg-[#a9cbfa]" />
      <div className="flex min-h-0 flex-1">
        <div className="flex w-[1004px] flex-col items-start bg-white pt-[6px] pl-[10px] font-['Noto_Sans',sans-serif] text-[15.5px] leading-[19.2px] text-black">
          <Fit w={793}>With the Free Format Display enhancement,  the user  can choose  independent monitor layouts for each monitor.</Fit>
          <Fit w={179} className="mt-[19.2px]">To use  this enhancement:</Fit>
          <Fit w={366} className="ml-[20px]">Go to monitor mode in the Hanging Protocol Wizard</Fit>
          <Fit w={479} className="ml-[20px]">Select the <b>Free Format</b> checkbox in the Monitor Control group box</Fit>
          <Fit w={351} className="ml-[20px]">Select any monitor layout from the dropdown box</Fit>
        </div>
        <ScrollTrack />
      </div>
    </main>
  );
}

function StatusBar() {
  return (
    <footer className="flex h-[10px] shrink-0 items-start overflow-hidden border-t border-[#567db1] bg-linear-to-b from-[#d5e6fb] to-[#a8c8f2] text-[12px] leading-4 text-[#15428b]">
      <Fit w={63} className="mt-[2px] ml-[8px]">Slide 6 of 19</Fit>
      <i className="ml-[9px] h-3 w-px bg-[#86a8d8]" />
      <Fit w={119} className="mt-[2px] ml-[8px]">"1_Slides with Subtitle"</Fit>
      <i className="ml-[8px] h-3 w-px bg-[#86a8d8]" />
      <svg className="ml-auto shrink-0" width="270" height="10" viewBox="1010 963 270 10" fill="none">
        <path d="M1010 963h270v10h-270z" fill="#a5c4ef" /><path d="M1010.500 963v10" stroke="#6c90c6" />
        <rect x="1015.500" y="965.500" width="55" height="12" rx="2" fill="#bed6f7" stroke="#5f85be" />
        <path d="M1034.500 965v9M1053.500 965v9" stroke="#86a5d0" />
        <path d="M1020.500 976v-7.500h10v9M1024.500 969v5M1026 971h4M1038.500 968.500h4v3h-4zM1044.500 968.500h4v3h-4zM1057 968.500h11M1059.500 969v3h6v-3" stroke="#454d5c" strokeWidth="1.400" />
        <text x="1080" y="977.500" textLength="21" fill="#15428b" fontSize="12" fontFamily="Open Sans, sans-serif">70%</text>
        <circle cx="1124" cy="973" r="7.500" fill="#e4eefb" stroke="#54709d" /><circle cx="1242" cy="973" r="7.500" fill="#e4eefb" stroke="#54709d" />
        <path d="M1242 968v8M1120 973h8M1184.500 969v4" stroke="#4b648e" strokeWidth="1.500" />
        <rect x="1163.500" y="966.500" width="8" height="12" fill="#dfeafa" stroke="#54709d" /><path d="M1167.500 969v5" stroke="#54709d" />
        <rect x="1259.500" y="965.500" width="15" height="14" rx="2" fill="#eef3fa" stroke="#3f557a" strokeDasharray="2 2" /><path d="M1262 971v-3h3M1272 971v-3h-3M1267 967v6" stroke="#222" strokeWidth="1.500" />
      </svg>
    </footer>
  );
}

function Annotations() {
  return (
    <>
      <div className="absolute top-[325px] left-[875px] h-[197px] w-[28px] border-2 border-[#dd1018] shadow-[2px_2px_3px_#b9a0a0]" />
      <div className="absolute top-[732px] left-[260px] h-[91px] w-[35px] border-2 border-[#dd1018] shadow-[2px_2px_3px_#c9b0b0]" />
      <div className="absolute top-[578px] left-[511px] flex h-[50px] w-[257px] items-center justify-center border-2 border-[#ea0000] bg-white pt-[3px] font-['Liberation_Sans',sans-serif] text-[17.5px] text-[#ea0000]">
        <Fit w={135}>use bullet points.</Fit>
      </div>
      <svg className="pointer-events-none absolute inset-0" width="1280" height="972" viewBox="0 0 1280 972">
        <g className="drop-shadow-[2px_2px_1px_rgba(0,0,0,0.3)]" stroke="#ea0000" strokeWidth="1.600" fill="#ea0000">
          <path d="M771 580.500L857 525M516 628L319 721" />
          <path stroke="none" d="M866 519.500l-7.500 10-5-7.500zM310 725l9-9 4 8z" />
        </g>
      </svg>
    </>
  );
}

export default function App() {
  return (
    <div className="relative flex h-[972px] w-[1280px] flex-col overflow-hidden bg-[#bfdbff] font-['Open_Sans','Noto_Sans',sans-serif]">
      <TitleBar />
      <TabBar />
      <Ribbon />
      <div className="flex min-h-0 flex-1">
        <SlidePanel />
        <div className="w-[6px] shrink-0 border-x border-l-[#e4f0ff] border-r-[#6f93c8] bg-[#a9cbfa]" />
        <Workspace />
      </div>
      <StatusBar />
      <OfficeButton />
      <Annotations />
    </div>
  );
}
